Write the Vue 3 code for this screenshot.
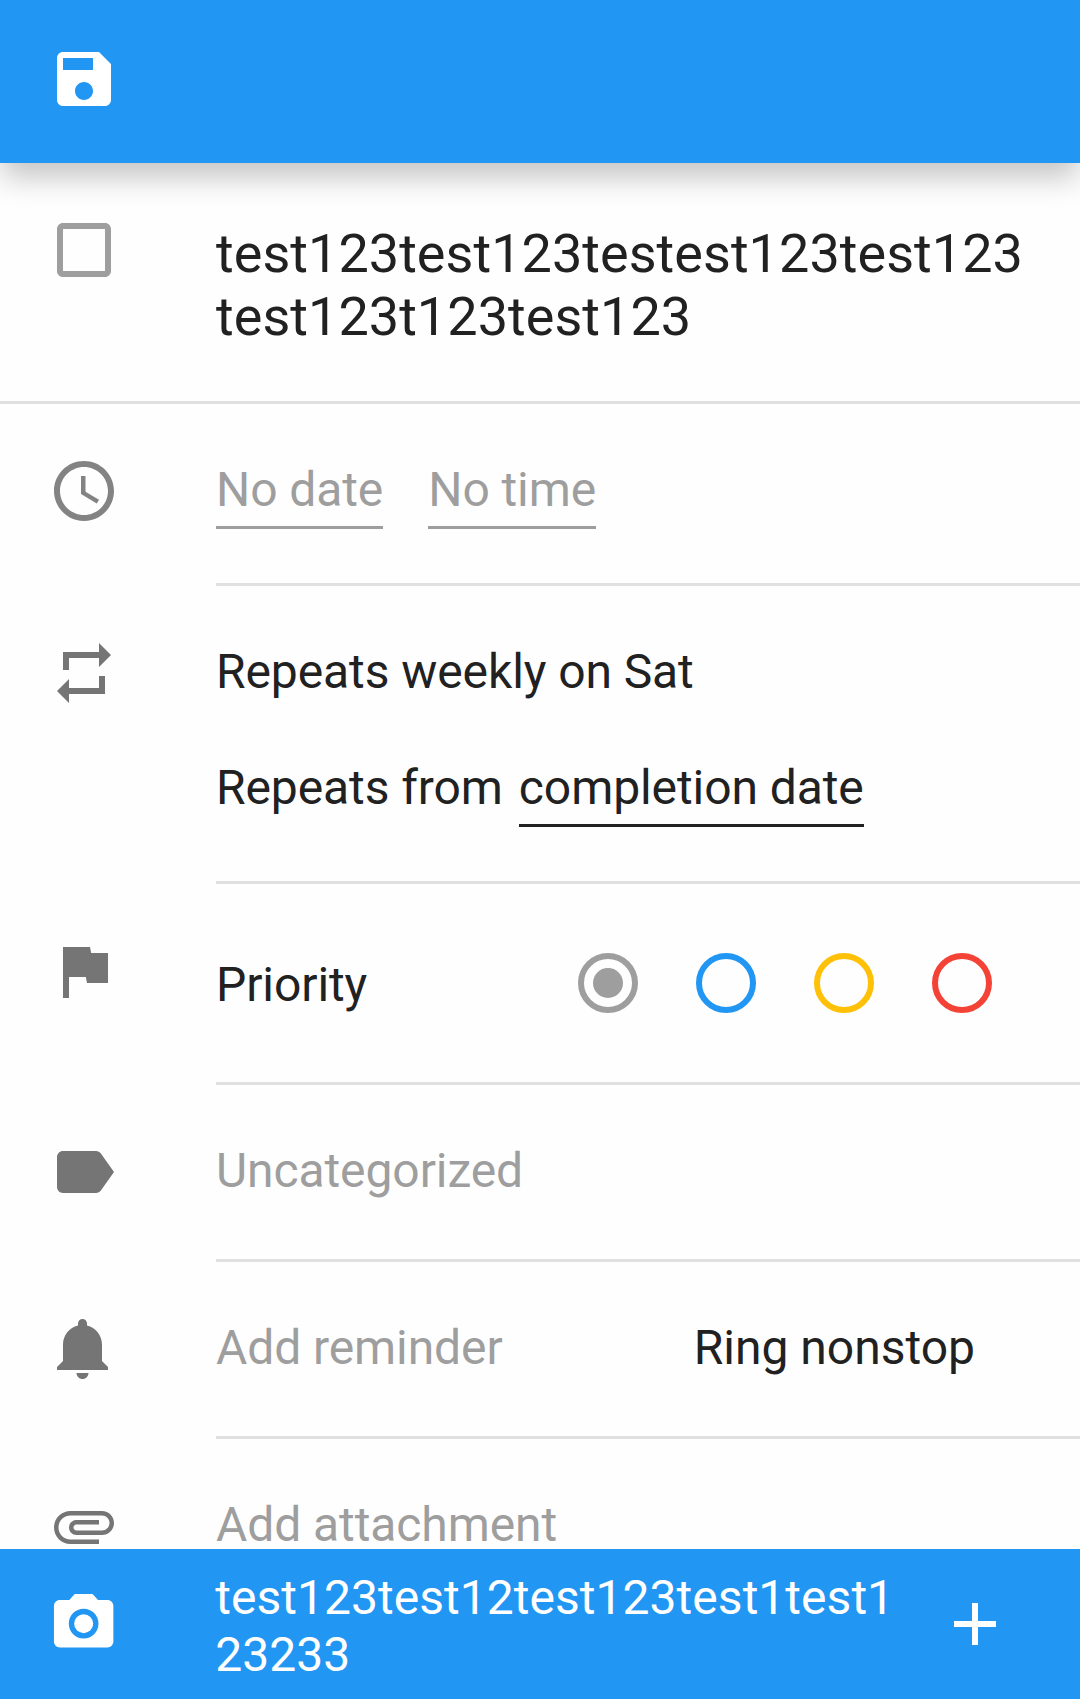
<script setup>
import { ref } from 'vue'

const title = ['test123test123testest123test123', 'test123t123test123']
const comment = ['test123test12test123test1test1', '23233']

const priorities = [
  { name: 'none', color: '#9e9e9e' },
  { name: 'low', color: '#2196f3' },
  { name: 'medium', color: '#ffc107' },
  { name: 'high', color: '#f44336' },
]
const priority = ref('none')
</script>

<template>
  <div class="screen">
    <header class="toolbar">
      <svg class="icon" viewBox="0 0 24 24" fill="#fff">
        <path d="M17 3H5c-1.11 0-2 .9-2 2v14c0 1.1.89 2 2 2h14c1.1 0 2-.9 2-2V7l-4-4zm-5 16c-1.66 0-3-1.34-3-3s1.34-3 3-3 3 1.34 3 3-1.34 3-3 3zm3-10H5V5h10v4z" />
      </svg>
    </header>

    <main class="form">
      <section class="row row-title">
        <div class="lead">
          <svg class="icon" viewBox="0 0 24 24" fill="#9e9e9e">
            <path d="M19 5v14H5V5h14m0-2H5c-1.1 0-2 .9-2 2v14c0 1.1.9 2 2 2h14c1.1 0 2-.9 2-2V5c0-1.1-.9-2-2-2z" />
          </svg>
        </div>
        <div class="body">
          <div v-for="line in title" :key="line">{{ line }}</div>
        </div>
      </section>

      <section class="row row-time">
        <div class="lead">
          <svg class="icon" viewBox="0 0 24 24" fill="#757575" fill-opacity=".9">
            <path d="M11.99 2C6.47 2 2 6.48 2 12s4.47 10 9.99 10C17.52 22 22 17.52 22 12S17.52 2 11.99 2zM12 20c-4.42 0-8-3.58-8-8s3.58-8 8-8 8 3.58 8 8-3.58 8-8 8z" />
            <path d="M12.5 7H11v6l5.25 3.15.75-1.23-4.5-2.67z" />
          </svg>
        </div>
        <div class="body muted">
          <span class="field date">No date</span>
          <span class="field">No time</span>
        </div>
      </section>

      <section class="row row-repeat">
        <div class="lead">
          <svg class="icon" viewBox="0 0 24 24">
            <path d="M7 7h10v3l4-4-4-4v3H5v6h2V7zm10 10H7v-3l-4 4 4 4v-3h12v-6h-2v4z" />
          </svg>
        </div>
        <div class="body">
          <div>Repeats weekly on Sat</div>
          <div class="from">
            <span>Repeats from</span>
            <span class="field">completion date</span>
          </div>
        </div>
      </section>

      <section class="row row-priority">
        <div class="lead">
          <svg class="icon" viewBox="0 0 24 24">
            <path d="M14.4 6L14 4H5v17h2v-7h5.6l.4 2h7V6z" />
          </svg>
        </div>
        <div class="body">
          <span>Priority</span>
          <div class="radios">
            <svg
              v-for="p in priorities"
              :key="p.name"
              class="radio"
              viewBox="0 0 20 20"
              @click="priority = p.name"
            >
              <circle cx="10" cy="10" r="9" fill="none" :stroke="p.color" stroke-width="2" />
              <circle v-if="priority === p.name" cx="10" cy="10" r="5" :fill="p.color" />
            </svg>
          </div>
        </div>
      </section>

      <section class="row row-short">
        <div class="lead">
          <svg class="icon" viewBox="0 0 24 24">
            <path d="M17.63 5.84C17.27 5.33 16.67 5 16 5L5 5.01C3.9 5.01 3 5.9 3 7v10c0 1.1.9 1.99 2 1.99L16 19c.67 0 1.27-.33 1.63-.84L22 12l-4.37-6.16z" />
          </svg>
        </div>
        <div class="body muted">Uncategorized</div>
      </section>

      <section class="row row-short">
        <div class="lead">
          <svg class="icon" viewBox="0 0 24 24">
            <path d="M11.5 22c1.1 0 2-.9 2-2h-4c0 1.1.9 2 2 2zm6.5-6v-5.5c0-3.07-2.13-5.64-5-6.32V3.5c0-.83-.67-1.5-1.5-1.5S10 2.67 10 3.5v.68c-2.87.68-5 3.25-5 6.32V16l-2 2v1h17v-1l-2-2z" />
          </svg>
        </div>
        <div class="body reminder">
          <span class="muted">Add reminder</span>
          <span class="ring">Ring nonstop</span>
        </div>
      </section>

      <section class="row row-last">
        <div class="lead">
          <svg class="icon" viewBox="0 0 24 24">
            <path d="M7.5 18C4.46 18 2 15.54 2 12.5S4.46 7 7.5 7H18c2.21 0 4 1.79 4 4s-1.79 4-4 4H9.5C8.12 15 7 13.88 7 12.5S8.12 10 9.5 10H17v1.5H9.5c-.55 0-1 .45-1 1s.45 1 1 1H18c1.38 0 2.5-1.12 2.5-2.5S19.38 8.5 18 8.5H7.5c-2.21 0-4 1.79-4 4s1.79 4 4 4H17V18H7.5z" />
          </svg>
        </div>
        <div class="body muted">Add attachment</div>
      </section>
    </main>

    <footer class="comment-bar">
      <svg class="icon camera" viewBox="0 0 24 24" fill="#fff">
        <circle cx="12" cy="12" r="3.2" />
        <path d="M9 2L7.17 4H4c-1.1 0-2 .9-2 2v12c0 1.1.9 2 2 2h16c1.1 0 2-.9 2-2V6c0-1.1-.9-2-2-2h-3.17L15 2H9zm3 15c-2.76 0-5-2.24-5-5s2.24-5 5-5 5 2.24 5 5-2.24 5-5 5z" />
      </svg>
      <div class="comment">
        <div v-for="line in comment" :key="line">{{ line }}</div>
      </div>
      <svg class="icon" viewBox="0 0 24 24" fill="#fff">
        <path d="M19 13h-6v6h-2v-6H5v-2h6V5h2v6h6v2z" />
      </svg>
    </footer>
  </div>
</template>

<style>
body {
  margin: 0;
  background: #fefefe;
}
</style>

<style scoped>
.screen {
  display: flex;
  flex-direction: column;
  width: 1080px;
  height: 1699px;
  overflow: hidden;
  background: #fefefe;
  color: #212121;
  font: 48px/56px Roboto, sans-serif;
}

.icon {
  display: block;
  flex: none;
  width: 72px;
  height: 72px;
}

.toolbar {
  position: relative;
  z-index: 1;
  flex: none;
  box-sizing: border-box;
  height: 163px;
  padding: 43px 48px 0;
  background: #2196f3;
  box-shadow: 0 16px 28px -2px rgba(0, 0, 0, 0.23);
}

.form {
  flex: none;
  height: 1386px;
}

.row {
  display: flex;
}

.lead {
  flex: none;
  box-sizing: border-box;
  width: 216px;
  padding: 51px 0 0 48px;
  fill: #757575;
}

.body {
  flex: 1;
  box-sizing: border-box;
  padding-top: 58px;
  border-bottom: 3px solid #e0e0e0;
  letter-spacing: -0.09px;
  white-space: nowrap;
}

.muted {
  color: #9e9e9e;
}

.row-title {
  box-sizing: border-box;
  height: 241px;
  border-bottom: 3px solid #e0e0e0;
}

.row-title .body {
  padding-top: 59px;
  border-bottom: 0;
  font-size: 54px;
  letter-spacing: 0.04px;
  line-height: 63px;
}

.row-time {
  height: 182px;
}

.row-time .body {
  display: flex;
  align-items: flex-start;
  gap: 45px;
}

.field {
  padding-bottom: 8px;
  border-bottom: 3px solid currentColor;
}

.row-repeat {
  height: 298px;
}

.from {
  display: flex;
  gap: 16px;
  margin-top: 60px;
}

.row-priority {
  height: 201px;
}

.row-priority .body {
  display: flex;
  align-items: flex-start;
  justify-content: space-between;
  padding-top: 73px;
  padding-right: 88px;
}

.radios {
  display: flex;
  gap: 58px;
  margin-top: -4px;
}

.radio {
  display: block;
  width: 60px;
  height: 60px;
}

.row-short {
  height: 177px;
}

.row-last {
  height: 110px;
}

.row-last .body {
  border-bottom: 0;
}

.reminder {
  display: flex;
  align-items: flex-start;
  justify-content: space-between;
  padding-right: 105px;
}

.ring {
  letter-spacing: 0;
}

.comment-bar {
  position: relative;
  z-index: 1;
  display: flex;
  flex: none;
  box-sizing: border-box;
  height: 150px;
  padding: 39px 69px 0 48px;
  background: #2196f3;
  color: #fff;
}

.camera {
  width: 71.3px;
  height: 71.3px;
}

.comment {
  flex: 1;
  margin-top: -19px;
  padding-left: 96px;
  letter-spacing: 0.03px;
  line-height: 57px;
  white-space: nowrap;
}
</style>
